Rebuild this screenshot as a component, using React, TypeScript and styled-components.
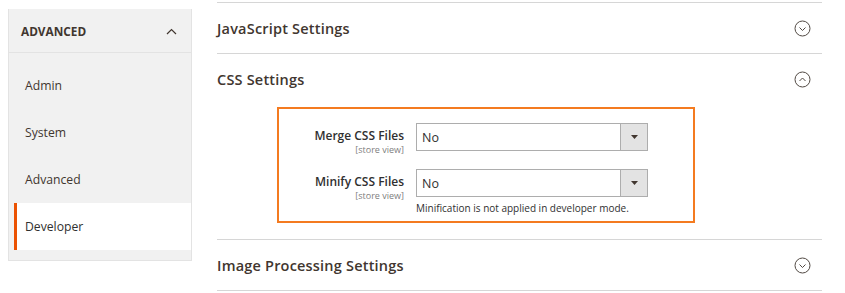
import React from 'react';
import styled, { createGlobalStyle } from 'styled-components';

const GlobalStyle = createGlobalStyle`
  body {
    margin: 0;
    background: #ffffff;
    font-family: 'Open Sans', Arial, sans-serif;
    color: #303030;
  }
`;

const Page = styled.div`
  display: flex;
  align-items: flex-start;
  width: 845px;
  height: 293px;
  overflow: hidden;
`;

const Sidebar = styled.nav`
  margin: 9px 0 0 8px;
  width: 184px;
  box-sizing: border-box;
  background: #f1f1f1;
  border: 1px solid #e3e3e3;
  border-top: none;
`;

const SideHeader = styled.div`
  display: flex;
  align-items: center;
  justify-content: space-between;
  height: 44px;
  box-sizing: border-box;
  padding: 1px 14px 0 12px;
  border-bottom: 1px solid #e3e3e3;
  font-size: 11.8px;
  font-weight: 700;
  color: #41362f;
`;

const SideList = styled.ul`
  list-style: none;
  margin: 0;
  padding: 9px 0 10px;
`;

const SideItem = styled.li<{ $active?: boolean }>`
  display: flex;
  align-items: center;
  height: 47px;
  box-sizing: border-box;
  font-size: 12.2px;
  color: ${(p) => (p.$active ? '#303030' : '#41362f')};
  padding-left: ${(p) => (p.$active ? '8px' : '16px')};
  margin-left: ${(p) => (p.$active ? '5px' : '0')};
  background: ${(p) => (p.$active ? '#ffffff' : 'transparent')};
  border-left: ${(p) => (p.$active ? '3px solid #eb5202' : 'none')};
`;

const Main = styled.main`
  margin: 2px 0 0 25px;
  width: 605px;
`;

const Section = styled.section`
  border-top: 1px solid #d6d6d6;
  &:last-child {
    border-bottom: 1px solid #d6d6d6;
  }
`;

const SectionHeader = styled.div`
  display: flex;
  align-items: center;
  justify-content: space-between;
  height: 50px;
  padding-right: 11px;
`;

const SectionTitle = styled.h2`
  margin: 0;
  font-size: 14.5px;
  font-weight: 600;
  color: #41362f;
  letter-spacing: 0.2px;
`;

const Highlight = styled.div`
  margin: 3px 0 16px 60px;
  width: 418px;
  box-sizing: border-box;
  border: 2px solid #f47b20;
  padding: 14px 0 6px 0;
  display: grid;
  grid-template-columns: 125px 232px;
  column-gap: 12px;
  row-gap: 13px;
`;

const LabelCell = styled.div`
  text-align: right;
  padding-top: 4px;
`;

const Label = styled.div`
  font-size: 12px;
  font-weight: 600;
  color: #303030;
  line-height: 17px;
`;

const Scope = styled.div`
  font-size: 9px;
  color: #808080;
  line-height: 12px;
`;

const Control = styled.div`
  display: flex;
  flex-direction: column;
`;

const Select = styled.div`
  display: flex;
  height: 28px;
  box-sizing: border-box;
  border: 1px solid #adadad;
  background: #ffffff;
`;

const SelectValue = styled.div`
  flex: 1;
  display: flex;
  align-items: center;
  padding-left: 5px;
  font-size: 12.5px;
  color: #303030;
`;

const SelectButton = styled.div`
  width: 26px;
  display: flex;
  align-items: center;
  justify-content: center;
  background: #e3e3e3;
  border-left: 1px solid #adadad;
`;

const Note = styled.div`
  margin-top: 4px;
  font-size: 10px;
  line-height: 14px;
  color: #303030;
`;

const CircleChevron = ({ up }: { up?: boolean }) => (
  <svg width="17" height="17" viewBox="0 0 17 17">
    <circle cx="8.5" cy="8.5" r="7.5" fill="none" stroke="#514943" strokeWidth="1" />
    <path
      d={up ? 'M5.5 10 L8.5 7 L11.5 10' : 'M5.5 7.5 L8.5 10.5 L11.5 7.5'}
      fill="none"
      stroke="#514943"
      strokeWidth="1"
    />
  </svg>
);

const Caret = () => (
  <svg width="7" height="4" viewBox="0 0 7 4">
    <path d="M0 0 L7 0 L3.5 4 Z" fill="#41362f" />
  </svg>
);

const ChevronUp = () => (
  <svg width="11" height="7" viewBox="0 0 11 7">
    <path d="M1 6 L5.5 1.5 L10 6" fill="none" stroke="#41362f" strokeWidth="1.2" />
  </svg>
);

function Field({ label, note }: { label: string; note?: string }) {
  return (
    <>
      <LabelCell>
        <Label>{label}</Label>
        <Scope>[store view]</Scope>
      </LabelCell>
      <Control>
        <Select>
          <SelectValue>No</SelectValue>
          <SelectButton>
            <Caret />
          </SelectButton>
        </Select>
        {note && <Note>{note}</Note>}
      </Control>
    </>
  );
}

export default function App() {
  const items = ['Admin', 'System', 'Advanced', 'Developer'];
  return (
    <>
      <GlobalStyle />
      <Page>
        <Sidebar>
          <SideHeader>
            ADVANCED
            <ChevronUp />
          </SideHeader>
          <SideList>
            {items.map((item) => (
              <SideItem key={item} $active={item === 'Developer'}>
                {item}
              </SideItem>
            ))}
          </SideList>
        </Sidebar>
        <Main>
          <Section>
            <SectionHeader>
              <SectionTitle>JavaScript Settings</SectionTitle>
              <CircleChevron />
            </SectionHeader>
          </Section>
          <Section>
            <SectionHeader>
              <SectionTitle>CSS Settings</SectionTitle>
              <CircleChevron up />
            </SectionHeader>
            <Highlight>
              <Field label="Merge CSS Files" />
              <Field label="Minify CSS Files" note="Minification is not applied in developer mode." />
            </Highlight>
          </Section>
          <Section>
            <SectionHeader>
              <SectionTitle>Image Processing Settings</SectionTitle>
              <CircleChevron />
            </SectionHeader>
          </Section>
        </Main>
      </Page>
    </>
  );
}
